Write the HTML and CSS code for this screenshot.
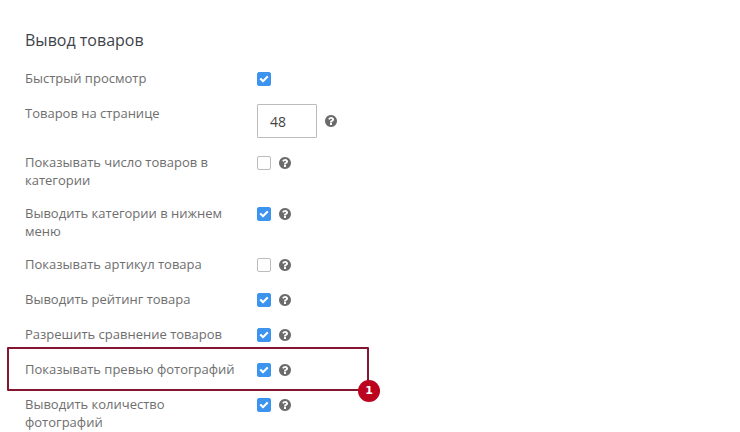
FILE: index.html
```
<!DOCTYPE html>
<html lang="ru">
<head>
    <meta charset="UTF-8">
    <meta name="viewport" content="width=device-width, initial-scale=1.0">
    <title>Вывод товаров</title>
    <link rel="stylesheet" href="styles.css">
</head>
<body>
<svg width="0" height="0" class="sprite" aria-hidden="true">
    <symbol id="help" viewBox="128 128 1536 1536">
        <path d="M1024 1376v-192q0-14-9-23t-23-9h-192q-14 0-23 9t-9 23v192q0 14 9 23t23 9h192q14 0 23-9t9-23zm256-672q0-88-55.5-163t-138.5-116-170-41q-243 0-371 213-15 24 8 42l132 100q7 6 19 6 16 0 25-12 53-68 86-92 34-24 86-24 48 0 85.5 26t37.5 59q0 38-20 61t-68 45q-63 28-115.5 86.5t-52.5 125.5v36q0 14 9 23t23 9h192q14 0 23-9t9-23q0-19 21.5-49.5t54.5-49.5q32-18 49-28.5t46-35 44.5-48 28-60.5 12.5-81zm384 192q0 209-103 385.5t-279.5 279.5-385.5 103-385.5-103-279.5-279.5-103-385.5 103-385.5 279.5-279.5 385.5-103 385.5 103 279.5 279.5 103 385.5z"/>
    </symbol>
</svg>
<form class="settings">
    <h2>Вывод товаров</h2>
    <div class="row">
        <label for="quickView">Быстрый просмотр</label>
        <div class="control">
            <input type="checkbox" id="quickView" checked>
        </div>
    </div>
    <div class="row">
        <label for="perPage">Товаров на странице</label>
        <div class="control">
            <input type="text" id="perPage" value="48">
            <button type="button" class="help" aria-label="Справка"><svg><use href="#help"/></svg></button>
        </div>
    </div>
    <div class="row">
        <label for="showCount">Показывать число товаров в категории</label>
        <div class="control">
            <input type="checkbox" id="showCount">
            <button type="button" class="help" aria-label="Справка"><svg><use href="#help"/></svg></button>
        </div>
    </div>
    <div class="row">
        <label for="bottomMenu">Выводить категории в нижнем меню</label>
        <div class="control">
            <input type="checkbox" id="bottomMenu" checked>
            <button type="button" class="help" aria-label="Справка"><svg><use href="#help"/></svg></button>
        </div>
    </div>
    <div class="row">
        <label for="showSku">Показывать артикул товара</label>
        <div class="control">
            <input type="checkbox" id="showSku">
            <button type="button" class="help" aria-label="Справка"><svg><use href="#help"/></svg></button>
        </div>
    </div>
    <div class="row">
        <label for="showRating">Выводить рейтинг товара</label>
        <div class="control">
            <input type="checkbox" id="showRating" checked>
            <button type="button" class="help" aria-label="Справка"><svg><use href="#help"/></svg></button>
        </div>
    </div>
    <div class="row">
        <label for="compare">Разрешить сравнение товаров</label>
        <div class="control">
            <input type="checkbox" id="compare" checked>
            <button type="button" class="help" aria-label="Справка"><svg><use href="#help"/></svg></button>
        </div>
    </div>
    <div class="row marked">
        <label for="preview">Показывать превью фотографий</label>
        <div class="control">
            <input type="checkbox" id="preview" checked>
            <button type="button" class="help" aria-label="Справка"><svg><use href="#help"/></svg></button>
        </div>
        <div class="frame"><span class="badge">1</span></div>
    </div>
    <div class="row">
        <label for="photoCount">Выводить количество фотографий</label>
        <div class="control">
            <input type="checkbox" id="photoCount" checked>
            <button type="button" class="help" aria-label="Справка"><svg><use href="#help"/></svg></button>
        </div>
    </div>
</form>
</body>
</html>
```

FILE: styles.css
```
body {
    margin: 0;
    background-color: #fff;
    font-family: "Open Sans", sans-serif;
    font-size: 13px;
    line-height: 18px;
    color: #6e6e6e;
}
.sprite {
    position: absolute;
}
.settings {
    display: flex;
    flex-direction: column;
    gap: 15px;
    padding: 29px 25px 0;
}
h2 {
    margin: 0 0 3px;
    font-size: 16px;
    font-weight: 400;
    line-height: 22px;
    color: #3f444b;
}
.row {
    display: grid;
    grid-template-columns: 216px 1fr;
    column-gap: 16px;
    align-items: start;
    min-height: 20px;
}
.control {
    display: flex;
    align-items: center;
    gap: 8px;
    min-height: 20px;
}
input[type="checkbox"] {
    appearance: none;
    width: 14px;
    height: 14px;
    margin: 0;
    border: 1px solid #bbb;
    border-radius: 2px;
    background-color: #fff;
}
input[type="checkbox"]:checked {
    border-color: #3d94ee;
    background: #3d94ee url("data:image/svg+xml,%3Csvg xmlns='http://www.w3.org/2000/svg' viewBox='0 0 1792 1792'%3E%3Cpath fill='%23fff' d='M1671 566q0 40-28 68l-724 724-136 136q-28 28-68 28t-68-28l-136-136-362-362q-28-28-28-68t28-68l136-136q28-28 68-28t68 28l294 295 656-657q28-28 68-28t68 28l136 136q28 28 28 68z'/%3E%3C/svg%3E") center / 10px no-repeat;
}
input[type="text"] {
    box-sizing: border-box;
    width: 60px;
    height: 34px;
    padding: 0 12px;
    border: 1px solid #bbb;
    border-radius: 1px;
    font-family: inherit;
    font-size: 14px;
    color: #444;
}
.help {
    width: 12px;
    height: 12px;
    padding: 0;
    border: none;
    background: none;
    color: #6b6b6b;
    cursor: pointer;
}
.help svg {
    display: block;
    width: 12px;
    height: 12px;
    fill: currentColor;
}
/* callout around the option */
.marked {
    position: relative;
}
.frame {
    position: absolute;
    top: -13px;
    left: -18px;
    box-sizing: border-box;
    width: 362px;
    height: 44px;
    border: 2px solid #851632;
    border-radius: 1px;
    pointer-events: none;
}
.badge {
    position: absolute;
    right: -13px;
    bottom: -13px;
    width: 22px;
    height: 22px;
    border-radius: 50%;
    background-color: #bb0320;
    color: #fff;
    font-family: "DejaVu Sans", sans-serif;
    font-size: 11px;
    font-weight: 700;
    line-height: 22px;
    text-align: center;
}
```
